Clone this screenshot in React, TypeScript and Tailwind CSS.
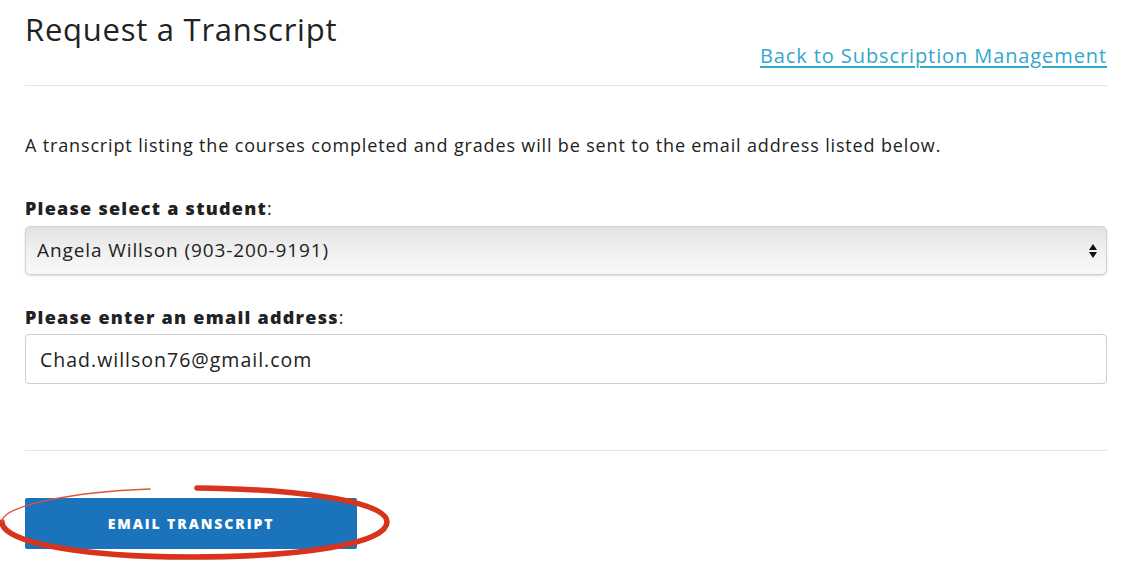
import { ChangeEvent, useState } from "react"

const students = ["Angela Willson (903-200-9191)"]

function SelectArrows() {
  return (
    <svg width="10" height="20" viewBox="0 0 10 20" className="absolute right-[9px] top-1/2 -translate-y-1/2">
      <path d="M5 3 L9 9 L1 9 Z" fill="#111" />
      <path d="M5 17 L9 11 L1 11 Z" fill="#111" />
    </svg>
  )
}

function CircleMark() {
  // hand drawn red circle around the submit button
  return (
    <svg
      width="400"
      height="90"
      viewBox="0 0 400 90"
      className="pointer-events-none absolute left-0 top-[480px]"
    >
      <path
        d="M197 8 C290 9 387 20 387 42 C387 64 300 77 190 77 C80 77 2 62 2 42"
        fill="none"
        stroke="#d8341d"
        strokeWidth="5.5"
        strokeLinecap="round"
      />
      <path
        d="M2 42 C2 26 70 12 150 9"
        fill="none"
        stroke="#e0533f"
        strokeWidth="1.5"
        strokeLinecap="round"
      />
    </svg>
  )
}

export default function App() {
  const [student, setStudent] = useState(students[0])
  const [email, setEmail] = useState("Chad.willson76@gmail.com")

  return (
    <div className="relative min-h-[577px] bg-white font-['Open_Sans',sans-serif] text-[#222]">
      <div className="ml-[25px] w-[1082px] pt-[9px]">
        <div className="flex items-start justify-between">
          <h1 className="text-[31px] leading-[40px] tracking-[0.75px]">Request a Transcript</h1>
          <a href="#" className="mt-[33px] text-[20px] leading-[28px] tracking-[0.9px] text-[#35a7cc] underline underline-offset-[3px]">
            Back to Subscription Management
          </a>
        </div>
        <hr className="mt-[15px] border-[#e3e3e3]" />

        <p className="mt-[46px] text-[18px] leading-[26px] tracking-[0.85px]">
          A transcript listing the courses completed and grades will be sent to the email address listed below.
        </p>

        <label className="mt-[37px] block text-[18px] leading-[26px]">
          <span className="font-extrabold tracking-[1.25px]">Please select a student</span>:
        </label>
        <div className="relative mt-[5px]">
          <select
            value={student}
            onChange={(e: ChangeEvent<HTMLSelectElement>) => setStudent(e.target.value)}
            className="h-[49px] w-full appearance-none rounded-[5px] border border-[#d2d2d2] bg-gradient-to-b from-[#e2e2e2] via-[#f0f0f0] to-[#f8f8f8] px-[11px] text-[19px] tracking-[0.9px] shadow-[0_1px_2px_rgba(0,0,0,0.15)] outline-none"
          >
            {students.map((s) => (
              <option key={s}>{s}</option>
            ))}
          </select>
          <SelectArrows />
        </div>

        <label className="mt-[29px] block text-[18px] leading-[26px]">
          <span className="font-extrabold tracking-[1.25px]">Please enter an email address</span>:
        </label>
        <input
          value={email}
          onChange={(e: ChangeEvent<HTMLInputElement>) => setEmail(e.target.value)}
          className="mt-[4px] h-[50px] w-full rounded-[4px] border border-[#cfcfcf] px-[14px] text-[19.5px] tracking-[1px] outline-none"
        />

        <hr className="mt-[66px] border-[#e3e3e3]" />

        <button className="mt-[47px] h-[51px] w-[332px] rounded-[2px] bg-[#1a73bb] text-[14px] font-extrabold uppercase tracking-[1.9px] text-white">
          Email Transcript
        </button>
      </div>
      <CircleMark />
    </div>
  )
}
